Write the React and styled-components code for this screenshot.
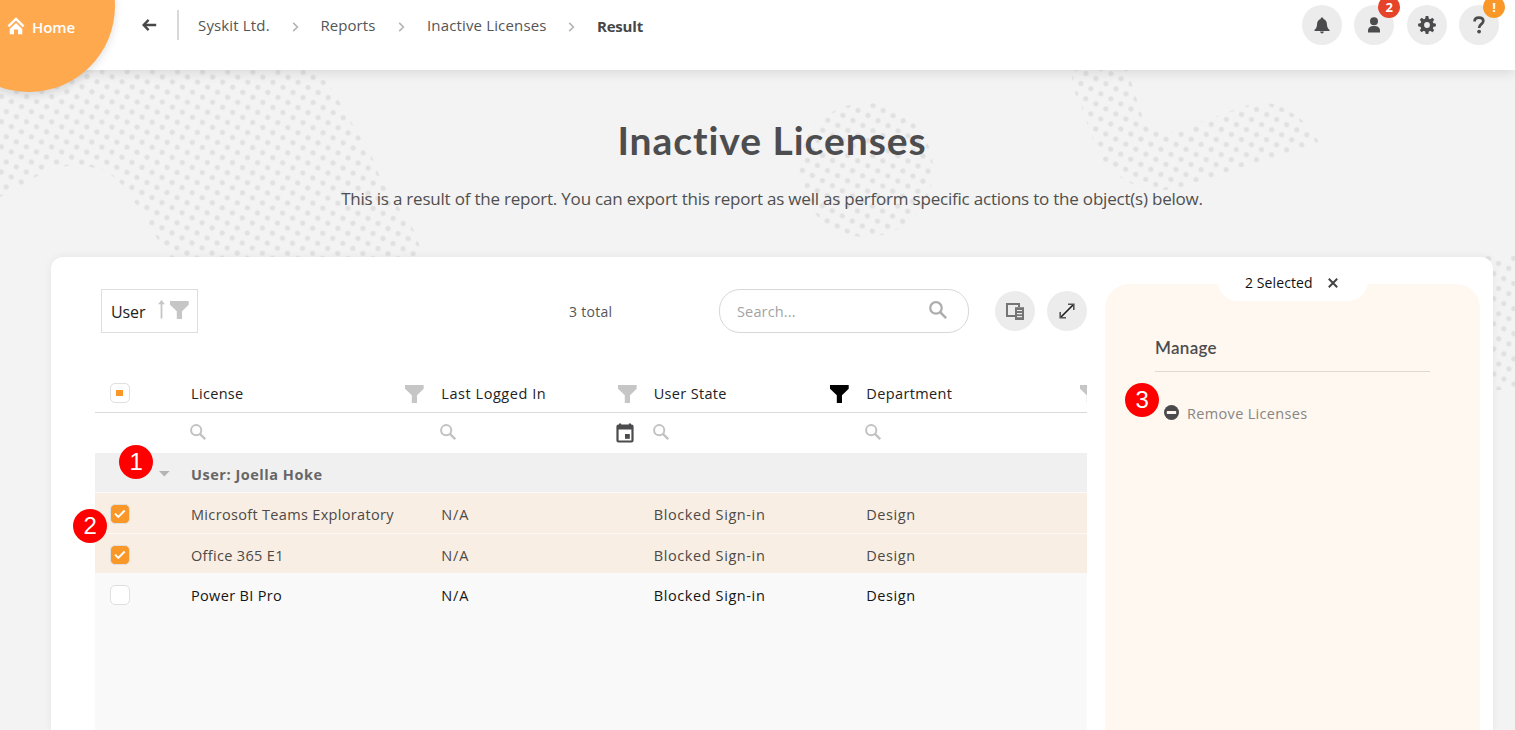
import React from "react";
import styled, { createGlobalStyle, css } from "styled-components";

const GlobalStyle = createGlobalStyle`
  * { box-sizing: border-box; }
  html, body { margin: 0; padding: 0; }
  body { overflow: hidden; background: #f3f3f3; }
`;

const ui = `"Open Sans", "Noto Sans", sans-serif`;
const display = `Lato, "Open Sans", sans-serif`;

const Page = styled.div`
  position: relative;
  width: 1515px;
  height: 730px;
  overflow: hidden;
  background: #f3f3f3;
  font-family: ${ui};
  color: #444;
  display: flex;
  flex-direction: column;
`;

const Backdrop = styled.svg`
  position: absolute;
  inset: 0;
`;

/* ---------- top bar ---------- */

const TopBar = styled.header`
  position: relative;
  z-index: 2;
  flex: none;
  height: 70px;
  background: #fff;
  box-shadow: 0 2px 12px rgba(0, 0, 0, 0.12);
  display: flex;
  justify-content: space-between;
  padding: 5px 16px 0 142px;
`;

const HomeLink = styled.a`
  position: absolute;
  left: -57px;
  top: -80px;
  width: 172px;
  height: 172px;
  border-radius: 50%;
  background: #ffa94f;
  box-shadow: 0 3px 8px rgba(0, 0, 0, 0.13);
  display: flex;
  align-items: flex-start;
  gap: 7px;
  padding: 97px 0 0 64px;
  color: #fff;
  font-size: 15px;
  line-height: 20px;
  font-weight: 600;
  letter-spacing: -0.1px;
`;

const Crumbs = styled.nav`
  display: flex;
  align-items: center;
  height: 40px;
`;

const BackArrow = styled.svg`
  flex: none;
  margin-right: 20px;
`;

const Divider = styled.span`
  width: 2px;
  height: 30px;
  background: #d9d9d9;
  margin-right: 19px;
`;

const Crumb = styled.span`
  width: ${(p) => p.$width}px;
  font-size: 15px;
  line-height: 20px;
  letter-spacing: ${(p) => p.$spacing ?? 0.15}px;
  white-space: nowrap;
  color: #555;
  padding-bottom: 1px;
  ${(p) =>
    p.$current &&
    css`
      font-weight: 700;
      color: #474747;
      padding: 1px 0 0;
    `}
`;

const CrumbArrow = styled.svg`
  flex: none;
  width: 7px;
  margin: 3px 22px 0 0;
`;

const Actions = styled.div`
  display: flex;
  gap: 12.4px;
`;

const RoundButton = styled.button`
  position: relative;
  flex: none;
  width: 40px;
  height: 40px;
  padding: 0;
  border: 0;
  border-radius: 50%;
  background: #ececec;
  display: flex;
  align-items: center;
  justify-content: center;
`;

const Badge = styled.span`
  position: absolute;
  left: 24px;
  top: -9px;
  width: 22px;
  height: 22px;
  border-radius: 50%;
  background: ${(p) => p.$color};
  color: #fff;
  display: flex;
  align-items: center;
  justify-content: center;
  font: 700 13px/13px ${ui};
`;

/* ---------- hero ---------- */

const Hero = styled.section`
  position: relative;
  flex: none;
  height: 187px;
  margin: 0 22px 0 51px;
  padding-top: 45px;
  text-align: center;
`;

const Title = styled.h1`
  margin: 0;
  font: 700 39px/50px ${display};
  letter-spacing: 0.95px;
  color: #4d4d4f;
`;

const Subtitle = styled.p`
  margin: 21px 0 0;
  font-size: 17px;
  line-height: 26px;
  color: #4f4f4f;
  white-space: nowrap;
  letter-spacing: -0.21px;
`;

/* ---------- card ---------- */

const Card = styled.main`
  position: relative;
  flex: 1;
  margin: 0 22px 0 51px;
  border-radius: 12px 12px 0 0;
  background: #fff;
  box-shadow: 0 0 10px rgba(0, 0, 0, 0.06);
  display: flex;
  padding-left: 44px;
`;

const Report = styled.div`
  width: 992px;
  margin-right: 18px;
  padding-top: 32px;
  display: flex;
  flex-direction: column;
`;

const Toolbar = styled.div`
  flex: none;
  height: 44px;
  display: flex;
  align-items: center;
  padding-left: 6px;
`;

const GroupChip = styled.div`
  width: 97px;
  height: 44px;
  border: 1px solid #dedede;
  display: flex;
  align-items: center;
  padding: 0 8px 0 9px;
  font-size: 16px;
  letter-spacing: -0.1px;
  color: #222;
`;

const ChipLabel = styled.span`
  width: 47px;
  padding-top: 1px;
`;

const ChipArrow = styled.svg`
  flex: none;
  margin: -3px 5px 0 0;
`;

const ChipFunnel = styled.span`
  display: flex;
  margin-top: -3px;
`;

const Total = styled.span`
  width: 150px;
  margin-left: 371px;
  font-size: 14px;
  letter-spacing: 0.3px;
  color: #555;
`;

const SearchBox = styled.div`
  width: 250px;
  height: 44px;
  border: 1px solid #d8d8d8;
  border-radius: 21px;
  display: flex;
  align-items: center;
  justify-content: space-between;
  padding: 0 21px 0 17px;
  margin-right: 26px;
  font-size: 14.5px;
  letter-spacing: 0.15px;
  color: #a3a3a3;
`;

const SearchGlyph = styled.svg`
  margin-top: -2px;
`;

const ToolButton = styled(RoundButton)`
  margin-right: ${(p) => p.$gap || 0}px;
`;

const Grid = styled.div`
  margin-top: 41px;
  flex: 1;
  background: #f9f9f9;
  overflow: hidden;
`;

const Row = styled.div`
  display: grid;
  grid-template-columns: 86px 250.3px 212.4px 212.6px 250px;
  align-items: center;
  height: ${(p) => p.$height}px;
  padding-top: ${(p) => p.$drop || 0}px;
  background: ${(p) => p.$bg || "transparent"};
  border-bottom: ${(p) => (p.$line ? `1px solid ${p.$line}` : "0")};
  font-size: 14.5px;
  line-height: 20px;
  color: ${(p) => p.$color || "#222"};
`;

const Cell = styled.div`
  display: flex;
  align-items: center;
  justify-content: space-between;
  padding: 0 7px 0 ${(p) => p.$indent ?? 10}px;
  letter-spacing: ${(p) => p.$spacing ?? 0.43}px;
  white-space: nowrap;
`;

const CellText = styled.span`
  padding-top: ${(p) => p.$drop || 0}px;
`;

const HeaderFunnel = styled.span`
  display: flex;
  padding-top: 2px;
`;

const GroupLabel = styled.div`
  grid-column: 2 / -1;
  padding: 2px 0 0 10px;
  font-weight: 700;
  letter-spacing: 0.53px;
  color: #666;
`;

const Check = styled.span`
  width: 20px;
  height: 20px;
  border-radius: 5px;
  border: 1px solid #dfdfdf;
  background: ${(p) => (p.$checked ? "#f99828" : "#fff")};
  display: flex;
  align-items: center;
  justify-content: center;
`;

const PartialMark = styled.span`
  width: 7px;
  height: 6px;
  margin-right: 1px;
  background: #f99828;
`;

/* ---------- side panel ---------- */

const SidePanel = styled.aside`
  position: relative;
  width: 375px;
  margin-top: 27px;
  border-radius: 24px 24px 0 0;
  background: #fef8f1;
  padding: 52px 50px 0;
`;

const SelectionTab = styled.div`
  position: absolute;
  left: 113px;
  top: -20px;
  width: 150px;
  height: 37px;
  border-radius: 0 0 20px 20px;
  background: #fff;
  display: flex;
  align-items: center;
  gap: 15.5px;
  padding-left: 27px;
  font-size: 14px;
  color: #111;
`;

const TabLabel = styled.span`
  letter-spacing: 0.1px;
`;

const PanelHeading = styled.h2`
  margin: 0;
  height: 36px;
  border-bottom: 1px solid #dcd8d4;
  font: 600 17px/24px ${display};
  letter-spacing: 0.3px;
  color: #4d4d4f;
`;

const PanelAction = styled.div`
  display: flex;
  align-items: flex-start;
  gap: 8px;
  margin: 32px 0 0 9px;
  font-size: 14.5px;
  line-height: 20px;
  letter-spacing: 0.33px;
  color: #888582;
`;

const RemoveGlyph = styled.svg`
  margin-top: 1px;
`;

/* ---------- numbered callouts ---------- */

const Callout = styled.span`
  position: absolute;
  z-index: 3;
  left: ${(p) => p.$x - 17}px;
  top: ${(p) => p.$y - 17}px;
  width: 34px;
  height: 34px;
  border-radius: 50%;
  background: #fe0000;
  color: #fff;
  font: 24px/34px "Liberation Sans", Arial, sans-serif;
  text-align: center;
`;

const Funnel = ({ color = "#c6c6c6" }) => (
  <svg width="19" height="18" viewBox="0 0 19 18">
    <path d="M0 0H18.7V3.8L12 10.3V18H6.8V10.3L0 3.8Z" fill={color} />
  </svg>
);

const Magnifier = ({ size = 16, color = "#c2c2c2" }) => (
  <SearchGlyph width={size} height={size} viewBox="0 0 16 16" fill="none" stroke={color} strokeWidth="2">
    <circle cx="6.2" cy="6.2" r="5.1" />
    <path d="M9.9 9.9L15.2 15.2" strokeWidth="2.3" />
  </SearchGlyph>
);

const CalendarGlyph = styled.svg`
  margin-right: 3px;
`;

const Calendar = () => (
  <CalendarGlyph width="18" height="20" viewBox="0 0 18 20">
    <path
      fillRule="evenodd"
      fill="#4b4b4d"
      d="M3 0.4H5.2V1.6H12.8V0.4H15V1.6H15.6Q17.6 1.6 17.6 3.6V17.6Q17.6 19.6 15.6 19.6H2.4Q0.4 19.6 0.4 17.6V3.6Q0.4 1.6 2.4 1.6H3ZM2.6 6.6V17.4H15.4V6.6Z"
    />
    <rect x="9" y="11" width="4.8" height="4.8" fill="#4b4b4d" />
  </CalendarGlyph>
);

const Tick = () => (
  <svg width="12" height="10" viewBox="0 0 12 10" fill="none" stroke="#fff" strokeWidth="2">
    <path d="M1 4.6L4.3 7.9L10.7 1.5" />
  </svg>
);

const Chevron = () => (
  <CrumbArrow height="10" viewBox="0 0 7 10" fill="none" stroke="#b4b4b4" strokeWidth="1.6">
    <path d="M1.2 0.9L5.4 5L1.2 9.1" />
  </CrumbArrow>
);

const Dots = ({ id, x, y, turn }) => (
  <pattern
    id={id}
    width="11.24"
    height="11.24"
    patternUnits="userSpaceOnUse"
    patternTransform={`translate(${x} ${y}) rotate(${turn}) translate(-5.62 -5.62)`}
  >
    <circle cx="5.62" cy="5.62" r="2.6" fill="#e1e1e1" />
  </pattern>
);

const headers = [
  { label: "License", spacing: 0.33 },
  { label: "Last Logged In", spacing: 0.55, calendar: true },
  { label: "User State", spacing: 0.33, active: true },
  { label: "Department", spacing: 0.38 },
];

const rows = [
  { name: "Microsoft Teams Exploratory", checked: true, height: 41, drop: 2, textDrop: 1, line: "#fbf8f5" },
  { name: "Office 365 E1", checked: true, height: 39, drop: 3, textDrop: 2 },
  { name: "Power BI Pro", checked: false, height: 41, drop: 3, textDrop: 2 },
];

export default function App() {
  return (
    <Page>
      <GlobalStyle />
      <Backdrop width="1515" height="730">
        <defs>
          <Dots id="dotsA" x={127.2} y={71.8} turn={26.75} />
          <Dots id="dotsB" x={857.7} y={160.7} turn={26.9} />
          <Dots id="dotsC" x={1111} y={73.7} turn={26.8} />
          <Dots id="dotsD" x={1498.7} y={313.7} turn={26.45} />
        </defs>
        <path
          fill="url(#dotsA)"
          d="M0 60H310L317 73Q330 84 339 101L353 125L373 159Q379 178 390 194L413 229Q420 240 422 262H172L163 250L151 227L142 213L128 193Q115 174 100 169Q75 162 50 169Q30 180 17 188L0 197Z"
        />
        <circle fill="url(#dotsB)" cx="866" cy="170" r="67" />
        <path
          fill="url(#dotsC)"
          d="M1070 68L1075 93L1082 108L1087 123L1093 140L1098 153Q1108 170 1120 177Q1145 194 1175 189L1213 177L1258 162L1306 148Q1320 145 1318 141Q1310 124 1292 113Q1270 98 1248 105L1217 116L1186 127Q1160 138 1147 127Q1140 112 1137 100L1127 68Z"
        />
        <rect fill="url(#dotsD)" x="1485" y="256" width="30" height="134" />
      </Backdrop>

      <TopBar>
        <HomeLink>
          <svg width="18" height="18" viewBox="0 0 18 18">
            <path d="M1.4 9.3L9 1.9L16.6 9.3" fill="none" stroke="#fff" strokeWidth="2.5" />
            <path d="M9 6L15.3 12V17.3H11V12.6H7V17.3H2.7V12Z" fill="#fff" />
          </svg>
          Home
        </HomeLink>
        <Crumbs>
          <BackArrow width="15" height="12" viewBox="0 0 15 12" fill="none" stroke="#474747" strokeWidth="2.3">
            <path d="M14.2 6H1.6M6.6 0.9L1.6 6L6.6 11.1" />
          </BackArrow>
          <Divider />
          <Crumb $width={93.5}>Syskit Ltd.</Crumb>
          <Chevron />
          <Crumb $width={77.5} $spacing={0.05}>Reports</Crumb>
          <Chevron />
          <Crumb $width={141}>Inactive Licenses</Crumb>
          <Chevron />
          <Crumb $width={60} $current $spacing={-0.2}>Result</Crumb>
        </Crumbs>
        <Actions>
          <RoundButton>
            <svg width="16" height="17" viewBox="0 0 16 17" fill="#4b4b4d">
              <path d="M8 0.5C8.9 0.5 9.4 1.1 9.4 1.9C11.8 2.6 12.8 4.6 12.9 6.9C13 10 14 11.6 15.5 12.8V14.1H0.5V12.8C2 11.6 3 10 3.1 6.9C3.2 4.6 4.2 2.6 6.6 1.9C6.6 1.1 7.1 0.5 8 0.5ZM6 14.6H10C9.8 15.7 9 16.4 8 16.4S6.2 15.7 6 14.6Z" />
            </svg>
          </RoundButton>
          <RoundButton>
            <svg width="14" height="16" viewBox="0 0 14 16" fill="#4b4b4d">
              <circle cx="7" cy="4.2" r="4" />
              <path d="M1 15.6V13.6C1 10.4 3.8 9 7 9S13 10.4 13 13.6V15.6Z" />
            </svg>
            <Badge $color="#e5432a">2</Badge>
          </RoundButton>
          <RoundButton>
            <svg width="18" height="18" viewBox="-9 -9 18 18">
              {[0, 45, 90, 135].map((a) => (
                <path key={a} d="M-1.9 -6L-1.3 -8.9H1.3L1.9 -6V6L1.3 8.9H-1.3L-1.9 6Z" fill="#4b4b4d" transform={`rotate(${a})`} />
              ))}
              <circle r="6.6" fill="#4b4b4d" />
              <circle r="2.9" fill="#ececec" />
            </svg>
          </RoundButton>
          <RoundButton>
            <svg width="12" height="18" viewBox="0 0 12 18">
              <path d="M1.6 5.4C1.6 3 3.4 1.7 6 1.7S10.3 3 10.3 5.1C10.3 8.2 6.1 8.2 6.1 11.9" fill="none" stroke="#4b4b4d" strokeWidth="2.7" />
              <circle cx="6.1" cy="15.6" r="1.9" fill="#4b4b4d" />
            </svg>
            <Badge $color="#f99828">!</Badge>
          </RoundButton>
        </Actions>
      </TopBar>

      <Hero>
        <Title>Inactive Licenses</Title>
        <Subtitle>
          This is a result of the report. You can export this report as well as perform specific actions to the
          object(s) below.
        </Subtitle>
      </Hero>

      <Card>
        <Report>
          <Toolbar>
            <GroupChip>
              <ChipLabel>User</ChipLabel>
              <ChipArrow width="7" height="19" viewBox="0 0 7 19" fill="#c6c6c6">
                <path d="M3.5 0L7 4.2H4.4V18.5H2.6V4.2H0Z" />
              </ChipArrow>
              <ChipFunnel>
                <Funnel />
              </ChipFunnel>
            </GroupChip>
            <Total>3 total</Total>
            <SearchBox>
              Search...
              <Magnifier size={18} color="#adadad" />
            </SearchBox>
            <ToolButton $gap={12}>
              <svg width="18" height="18" viewBox="0 0 18 18" fill="none" stroke="#757575" strokeWidth="2">
                <path d="M9 14H1V2H13V5" />
                <path d="M9 5.2H18V18H9Z" fill="#757575" stroke="none" />
                <path d="M11 8.5H16M11 11.6H16M11 14.7H16" stroke="#ececec" strokeWidth="1.2" />
              </svg>
            </ToolButton>
            <ToolButton>
              <svg width="16" height="16" viewBox="0 0 16 16" fill="none" stroke="#1c1c1c" strokeWidth="1.6">
                <path d="M1.5 14.5L14.5 1.5" />
                <path d="M9 1.2H14.8V7M1.2 9V14.8H7" stroke="#555" />
              </svg>
            </ToolButton>
          </Toolbar>

          <Grid>
            <Row $height={39} $bg="#fff" $line="#d9d9d9">
              <Cell $indent={15}>
                <Check>
                  <PartialMark />
                </Check>
              </Cell>
              {headers.map((h) => (
                <Cell key={h.label} $spacing={h.spacing}>
                  <CellText $drop={2}>{h.label}</CellText>
                  <HeaderFunnel>
                    <Funnel color={h.active ? "#000" : "#c6c6c6"} />
                  </HeaderFunnel>
                </Cell>
              ))}
            </Row>
            <Row $height={40} $bg="#fff">
              <Cell />
              {headers.map((h) => (
                <Cell key={h.label} $indent={9}>
                  <Magnifier />
                  {h.calendar && <Calendar />}
                </Cell>
              ))}
            </Row>
            <Row $height={40} $drop={2} $bg="#f0f0f0" $line="#fbfaf9">
              <Cell $indent={64}>
                <svg width="11" height="6" viewBox="0 0 11 6">
                  <path d="M0 0H10.6L5.3 5.6Z" fill="#b3b3b3" />
                </svg>
              </Cell>
              <GroupLabel>User: Joella Hoke</GroupLabel>
            </Row>
            {rows.map((r) => (
              <Row
                key={r.name}
                $height={r.height}
                $drop={r.drop}
                $line={r.line}
                $bg={r.checked ? "#f9eee4" : "transparent"}
                $color={r.checked ? "#4c4947" : "#151515"}
              >
                <Cell $indent={15}>
                  <Check $checked={r.checked}>{r.checked && <Tick />}</Check>
                </Cell>
                <Cell $spacing={0.33}>
                  <CellText $drop={r.textDrop}>{r.name}</CellText>
                </Cell>
                <Cell $spacing={0.85}>
                  <CellText $drop={r.textDrop}>N/A</CellText>
                </Cell>
                <Cell $spacing={0.6}>
                  <CellText $drop={r.textDrop}>Blocked Sign-in</CellText>
                </Cell>
                <Cell $spacing={0.55}>
                  <CellText $drop={r.textDrop}>Design</CellText>
                </Cell>
              </Row>
            ))}
          </Grid>
        </Report>

        <SidePanel>
          <SelectionTab>
            <TabLabel>2 Selected</TabLabel>
            <svg width="10" height="10" viewBox="0 0 10 10" stroke="#444" strokeWidth="2">
              <path d="M0.8 0.8L9.2 9.2M9.2 0.8L0.8 9.2" />
            </svg>
          </SelectionTab>
          <PanelHeading>Manage</PanelHeading>
          <PanelAction>
            <RemoveGlyph width="15" height="15" viewBox="0 0 15 15">
              <circle cx="7.5" cy="7.5" r="7.5" fill="#4b4b4d" />
              <rect x="2.8" y="6.1" width="9.4" height="2.8" rx="0.6" fill="#fef8f1" />
            </RemoveGlyph>
            Remove Licenses
          </PanelAction>
        </SidePanel>
      </Card>

      <Callout $x={136.3} $y={462}>1</Callout>
      <Callout $x={90.3} $y={526}>2</Callout>
      <Callout $x={1142.3} $y={400}>3</Callout>
    </Page>
  );
}
